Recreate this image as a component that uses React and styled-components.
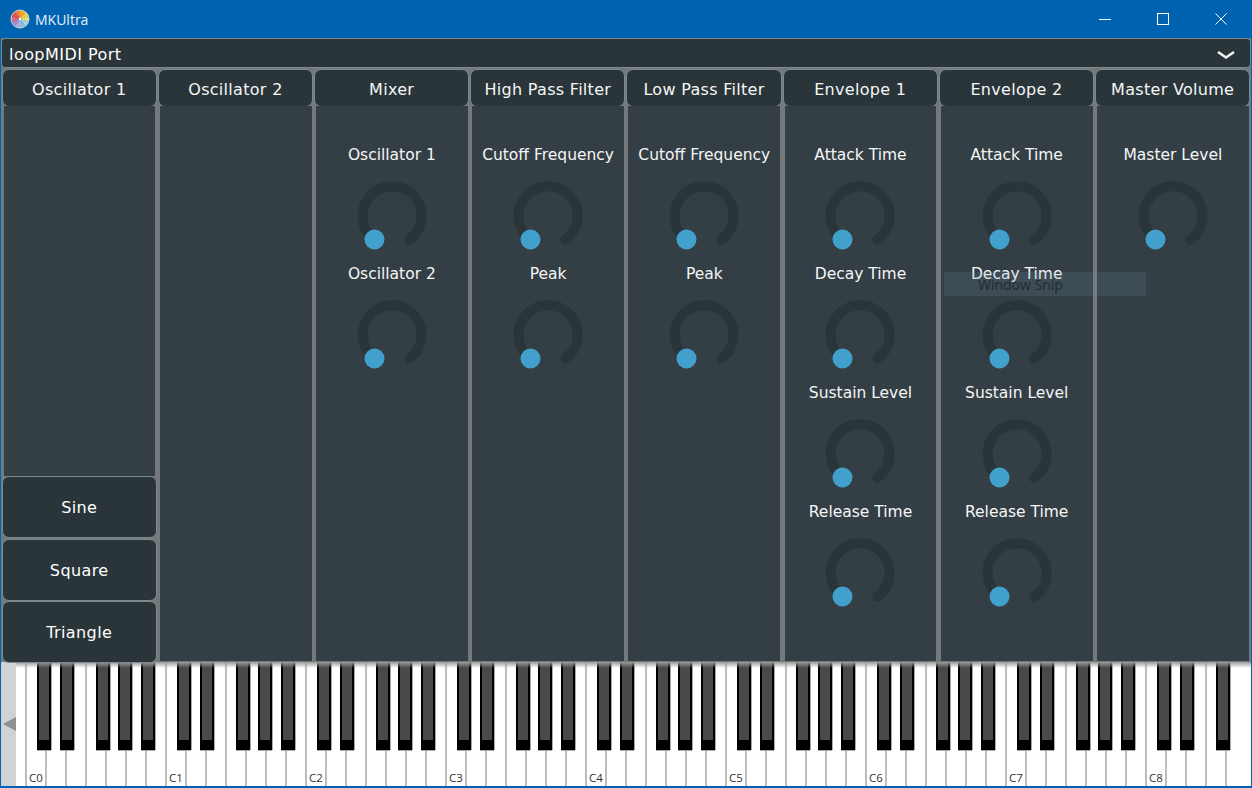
import React from 'react';
import styled, { createGlobalStyle } from 'styled-components';

const Global = createGlobalStyle`
  html, body { margin: 0; padding: 0; background: #0063b1; }
  * { box-sizing: border-box; }
`;
const Win = styled.div`
  position: relative;
  width: 1252px; height: 788px;
  border: 1px solid #0063b1; border-top: 0;
  background: #747a7b;
  display: flex; flex-direction: column; overflow: hidden;
  font-family: "DejaVu Sans", sans-serif;
`;
const TitleBar = styled.div`
  height: 38px; flex: none; background: #0063b1; display: flex; align-items: center;
  color: #fff; font: 14px "Open Sans", sans-serif; padding-left: 10px; margin: 0 -1px;
`;
const TitleText = styled.span`margin-left: 5px; color: #e6f0f8;`;
const WinButtons = styled.div`margin-left: auto; margin-right: 2px; display: flex;`;
const WinBtn = styled.div`width: 58px; height: 38px; display: flex; align-items: center; justify-content: center;`;
const Combo = styled.div`
  height: 30px; flex: none; background: #2a3539; border: 1px solid #7d8b8e; border-radius: 4px;
  color: #fff; font-size: 16px; letter-spacing: 0.45px; display: flex; align-items: center; justify-content: space-between;
  padding: 3px 14px 0 7px;
`;
const Columns = styled.div`
  position: relative; z-index: 1;
  height: 595px; margin-bottom: -1px; flex: none; display: grid; grid-template-columns: repeat(8, 1fr); padding: 1px 0 0 0.4px;
`;
const Column = styled.div`
  display: flex; flex-direction: column; padding: 0 0.75px 0 0.25px; min-width: 0;
`;
const Head = styled.div`
  height: 38px; flex: none; background: #2a3539; border: 1px solid #7d8b8e; border-radius: 7px;
  color: #f4f6f6; font-size: 16px; letter-spacing: 0.3px; display: flex; align-items: center; justify-content: center;
  white-space: nowrap; padding-top: 2px;
`;
const Body = styled.div`
  flex: 1; background: #343f45; display: flex; flex-direction: column; align-items: center; 
  padding-top: 38px; margin: -1px 1.5px 2px 2px; min-height: 0;
`;
const WaveBody = styled.div`flex: 1; background: #343f45; margin: -1px 1.5px 0 2px;`;
const WaveBtn = styled.div`
  height: 62px; flex: none; background: #2a3539; border: 1px solid #7d8b8e; border-radius: 7px; color: #fff;
  font-size: 16px; letter-spacing: 0.4px; display: flex; align-items: center; justify-content: center; margin-top: 0.5px; padding-top: 1px;
`;
const KnobWrap = styled.div`
  height: 119px; flex: none; width: 100%; display: flex; flex-direction: column; align-items: center; padding-top: 1px;
`;
const KnobLabel = styled.div`
  color: #f4f6f6; font-size: 15.5px; line-height: 20px; height: 36px; white-space: nowrap;
`;
const Keyboard = styled.div`
  position: relative; flex: 1; display: flex; background: #fff; border-bottom: 1px solid #0063b1;
`;
const Scroll = styled.div`
  width: 15px; flex: none; background: #d2d2d2; display: flex; align-items: center; padding: 0 0 0 2px;
`;
const Arrow = styled.div`
  width: 0; height: 0; border-style: solid; border-width: 7px 13px 7px 0; border-color: transparent #8f8f8f transparent transparent;
`;
const WhiteKey = styled.div`
  position: relative; flex: none; width: ${p => p.$w}px; border-right: ${p => p.$edge ? 0 : 2}px solid #bdbdbd; background: #fff;
`;
const KeyName = styled.span`
  position: absolute; left: 2px; bottom: 1px; font: 11.5px/14px "Open Sans", sans-serif; color: #333;
`;
const BlackKey = styled.div`
  position: absolute; top: 0; width: 14px; height: 88px; background: #000; padding: 0 2px 10px 2px;
  box-shadow: 1px 0 0 #a9a9a9, 0 1px 0 #a9a9a9;
`;
const BlackFace = styled.div`height: 100%; background: #494949;`;
const KeyShade = styled.div`
  position: absolute; left: 15px; right: 0; top: 0; height: 6px;
  background: linear-gradient(#9a9a9a, rgba(255,255,255,0));
`;
const Snip = styled.div`
  position: absolute; z-index: 2; left: 943px; top: 272px; width: 202px; height: 24px; background: rgba(110,140,170,0.17);
  color: rgba(25,33,38,0.8); font: 14px/26px "Open Sans", sans-serif; padding-left: 34px; pointer-events: none;
`;

const Knob = ({ label }) => (
  <KnobWrap>
    <KnobLabel>{label}</KnobLabel>
    <svg width="70" height="70" viewBox="0 0 70 70">
      <path d="M17.5 58.5 A29.5 29.5 0 1 1 52.3 58.8" fill="none" stroke="#2a3539" strokeWidth="10" strokeLinecap="round" />
      <circle cx="17.5" cy="58.5" r="10" fill="#42a1cc" />
    </svg>
  </KnobWrap>
);

const Logo = () => {
  const colors = ['#f6a623','#f7c948','#f2dc6b','#9fd3e8','#8fb8e0','#b9a6dc','#a78bd0','#e06a7a','#e8504a','#f0803c'];
  const n = colors.length;
  return (
    <svg width="20" height="20" viewBox="-10 -10 20 20">
      {colors.map((c, i) => {
        const a = (i / n) * Math.PI * 2, b = ((i + 1) / n) * Math.PI * 2;
        return <path key={c} d={`M0 0L${9 * Math.sin(a)} ${-9 * Math.cos(a)}A9 9 0 0 1 ${9 * Math.sin(b)} ${-9 * Math.cos(b)}Z`} fill={c} />;
      })}
      <circle r="9" fill="none" stroke="#bfe0c8" strokeWidth="1" />
      <circle r="1.3" fill="#fff" />
    </svg>
  );
};

const cols = [
  { t: 'Oscillator 1', wave: true },
  { t: 'Oscillator 2', empty: true },
  { t: 'Mixer', k: ['Oscillator 1', 'Oscillator 2'] },
  { t: 'High Pass Filter', k: ['Cutoff Frequency', 'Peak'] },
  { t: 'Low Pass Filter', k: ['Cutoff Frequency', 'Peak'] },
  { t: 'Envelope 1', k: ['Attack Time', 'Decay Time', 'Sustain Level', 'Release Time'] },
  { t: 'Envelope 2', k: ['Attack Time', 'Decay Time', 'Sustain Level', 'Release Time'] },
  { t: 'Master Volume', k: ['Master Level'] },
];

const whites = Array.from({ length: 61 }, (_, i) => i);
const blackOffsets = [11, 34, 70, 92, 115];
const blacks = [];
for (let o = 0; o < 9; o++) {
  blackOffsets.forEach((d, j) => {
    if (o === 8 && j > 2) return;
    blacks.push(25 + o * 140 + d);
  });
}

export default function App() {
  return (
    <Win>
      <Global />
      <TitleBar>
        <Logo />
        <TitleText>MKUltra</TitleText>
        <WinButtons>
          <WinBtn><svg width="12" height="12"><path d="M0 6.5H12" stroke="#fff" /></svg></WinBtn>
          <WinBtn><svg width="12" height="12"><rect x=".5" y=".5" width="11" height="11" fill="none" stroke="#fff" /></svg></WinBtn>
          <WinBtn><svg width="12" height="12"><path d="M.5 .5L11.5 11.5M11.5 .5L.5 11.5" stroke="#fff" /></svg></WinBtn>
        </WinButtons>
      </TitleBar>
      <Combo>
        loopMIDI Port
        <svg width="20" height="10" viewBox="0 0 20 10"><path d="M2 2L10 7.5L18 2" fill="none" stroke="#f2f4f4" strokeWidth="2.6" /></svg>
      </Combo>
      <Columns>
        {cols.map(c => (
          <Column key={c.t}>
            <Head>{c.t}</Head>
            {c.wave ? (
              <>
                <WaveBody />
                {['Sine', 'Square', 'Triangle'].map(w => <WaveBtn key={w}>{w}</WaveBtn>)}
              </>
            ) : (
              <Body>{(c.k || []).map(l => <Knob key={l} label={l} />)}</Body>
            )}
          </Column>
        ))}
      </Columns>
      <Keyboard>
        <Scroll><Arrow /></Scroll>
        <WhiteKey $w={11} />
        {whites.map(i => (
          <WhiteKey key={i} $w={20} $edge={i === 60}>
            {i % 7 === 0 && <KeyName>C{i / 7}</KeyName>}
          </WhiteKey>
        ))}
        {blacks.map(x => <BlackKey key={x} style={{ left: x }}><BlackFace /></BlackKey>)}
        <KeyShade />
      </Keyboard>
      <Snip>Window Snip</Snip>
    </Win>
  );
}
